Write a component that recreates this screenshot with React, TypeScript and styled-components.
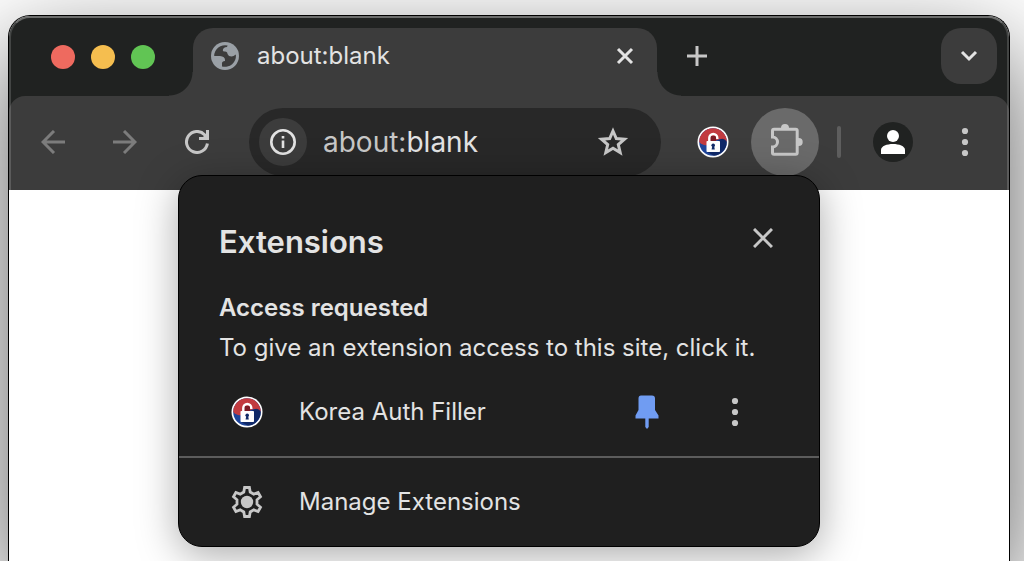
import React from "react";
import styled, { createGlobalStyle } from "styled-components";

const GlobalStyle = createGlobalStyle`
  *, *::before, *::after { box-sizing: border-box; }
  html, body, #root { height: 100%; }
  body {
    margin: 0;
    overflow: hidden;
    background: #fff;
    font-family: Inter, "Liberation Sans", sans-serif;
    color: #e3e3e3;
  }
  button, input { font: inherit; color: inherit; }
  h1, h2, p { margin: 0; }
`;

const Desktop = styled.div`
  display: flex;
  height: 100%;
  padding: 15px 14px 0 8px;
`;

const BrowserWindow = styled.main`
  flex: 1;
  display: flex;
  flex-direction: column;
  min-width: 0;
  border: 1px solid #000;
  border-bottom: 0;
  border-radius: 22px 22px 0 0;
  background: #fff;
  box-shadow: 0 36px 100px rgba(0, 0, 0, 0.65);
`;

const Chrome = styled.header`
  position: relative;
  border-radius: 21px 21px 0 0;
  background: #202221;

  &::after {
    content: "";
    position: absolute;
    inset: 0;
    border: 2px solid rgba(255, 255, 255, 0.16);
    border-top-color: rgba(255, 255, 255, 0.34);
    border-bottom: 0;
    border-radius: inherit;
    pointer-events: none;
  }
`;

const TabStrip = styled.div`
  display: flex;
  align-items: flex-end;
  height: 80px;
  padding: 0 12px 0 42px;
`;

const WindowControls = styled.div`
  display: flex;
  align-items: center;
  gap: 16px;
  height: 68px;
  margin-right: 38px;
  padding-bottom: 10px;
`;

const Light = styled.button<{ $color: string }>`
  width: 24px;
  height: 24px;
  padding: 0;
  border: 0;
  border-radius: 50%;
  background: ${(p) => p.$color};
`;

const Tab = styled.div`
  position: relative;
  display: flex;
  align-items: center;
  flex: 0 1 464px;
  height: 68px;
  padding: 0 16px 12px 18px;
  border-radius: 20px 20px 0 0;
  background: #3c3c3c;

  &::before,
  &::after {
    content: "";
    position: absolute;
    bottom: 0;
    width: 24px;
    height: 24px;
  }
  &::before {
    right: 100%;
    background: radial-gradient(circle at 0 0, transparent 23px, #3c3c3c 24px);
  }
  &::after {
    left: 100%;
    background: radial-gradient(circle at 100% 0, transparent 23px, #3c3c3c 24px);
  }
`;

const TabTitle = styled.span`
  flex: 1;
  margin-left: 18px;
  font-size: 24px;
  line-height: 32px;
`;

const PlainButton = styled.button<{ $size: number; $shade?: string }>`
  display: flex;
  flex: none;
  align-items: center;
  justify-content: center;
  width: ${(p) => p.$size}px;
  height: ${(p) => p.$size}px;
  padding: 0;
  border: 0;
  border-radius: 50%;
  background: ${(p) => p.$shade ?? "transparent"};
`;

const NewTabSlot = styled.div`
  display: flex;
  flex: 1;
  align-items: center;
  height: 56px;
  margin-bottom: 12px;
  padding-left: 12px;
`;

const TabSearch = styled(PlainButton)`
  margin-bottom: 12px;
  border-radius: 20px;
`;

const Toolbar = styled.nav`
  display: flex;
  align-items: center;
  gap: 4px;
  padding: 12px 10px 14px;
  border-radius: 16px 16px 0 0;
  background: #3c3c3c;
`;

const AddressBar = styled.div`
  display: flex;
  flex: 1;
  align-items: center;
  min-width: 0;
  height: 68px;
  margin: 0 14px;
  padding: 0 14px 0 10px;
  border-radius: 34px;
  background: #282828;
`;

const Address = styled.label`
  display: flex;
  flex: 1;
  min-width: 0;
  margin-left: 16px;
  font-size: 28px;
  line-height: 36px;
  color: #c7c7c7;
`;

const AddressInput = styled.input`
  flex: 1;
  min-width: 0;
  padding: 0;
  border: 0;
  outline: 0;
  background: transparent;
  color: #e3e3e3;
`;

const Divider = styled.span`
  flex: none;
  width: 4px;
  height: 32px;
  margin: 0 14px;
  border-radius: 2px;
  background: #5e5e5e;
`;

const MenuAnchor = styled.div`
  position: relative;
  z-index: 1;
`;

const Popup = styled.section`
  position: absolute;
  top: 67px;
  right: -1px;
  width: 642px;
  border: 1px solid #000;
  border-radius: 24px;
  background: #1f1f1f;
  box-shadow: 0 8px 40px rgba(0, 0, 0, 0.34);
`;

const PopupHeader = styled.div`
  display: flex;
  align-items: flex-start;
  justify-content: space-between;
  padding: 42px 36px 22px 40px;
`;

const PopupTitle = styled.h1`
  font-size: 31px;
  font-weight: 600;
  line-height: 48px;
`;

const AccessInfo = styled.div`
  padding: 0 40px;
  font-size: 24px;
  line-height: 40px;
  white-space: nowrap;
`;

const AccessTitle = styled.h2`
  font-size: 24px;
  font-weight: 600;
  line-height: 40px;
`;

const Row = styled.div`
  display: flex;
  padding: 0 40px;

  & + & { border-top: 2px solid #5c5c5c; }
`;

const RowButton = styled.button`
  display: flex;
  flex: 1;
  align-items: center;
  gap: 36px;
  height: 88px;
  padding: 0 12px;
  border: 0;
  background: transparent;
  font-size: 24px;
  line-height: 32px;
  text-align: left;
`;

const Stroke = ({ d, size, width, color = "#c7c7c7" }: { d: string; size: number; width: number; color?: string }) => (
  <svg width={size} height={size} viewBox={`0 0 ${size} ${size}`} fill="none" stroke={color} strokeWidth={width}>
    <path d={d} />
  </svg>
);

const Dots = () => (
  <svg width="8" height="32" viewBox="0 0 8 32" fill="#c7c7c7">
    <circle cx="4" cy="5" r="3.1" />
    <circle cx="4" cy="16" r="3.1" />
    <circle cx="4" cy="27" r="3.1" />
  </svg>
);

const Globe = () => (
  <svg width="28" height="28" viewBox="0 0 28 28">
    <circle cx="14" cy="14" r="14" fill="#9aa0a6" />
    <path d="M3.200 14 A10.800 10.800 0 0 1 16.600 3.500 L16 5 Q12 5 11.800 8.500 Q12 9.800 14 9.500 Q16.500 9.500 16.500 12 Q17.500 14.500 20.500 14.500 Q22.500 14.500 24.800 12.500 A10.800 10.800 0 0 1 11 24.400 V22 Q10.500 19.500 14 19 Q14.500 14.500 9 14Z" fill="#3c3c3c" />
  </svg>
);

const Reload = () => (
  <svg width="24" height="24" viewBox="0 0 24 24" fill="none" stroke="#c7c7c7" strokeWidth="3">
    <path d="M22.400 13.500 A10.500 10.500 0 1 1 19.600 4.700 L22 7.500" />
    <path d="M22.500 0 V8.500 H14" />
    <path d="M16.500 8.500 L22.500 2.500 V8.500Z" fill="#c7c7c7" stroke="none" />
  </svg>
);

const LockBadge = () => (
  <svg width="32" height="32" viewBox="0 0 32 32">
    <circle cx="16" cy="16" r="15.500" fill="#fff" />
    <circle cx="16" cy="16" r="13.800" fill="#1e459b" />
    <path d="M2.200 16 A13.800 13.800 0 0 1 29.800 16 Q28 12.500 23 13 Q18 14 16 17 Q12 20 7 19 Q3.500 18 2.200 16Z" fill="#c23b40" />
    <path d="M22 14 L25 12.800 Q28.500 13 29.800 16 A13.800 13.800 0 0 1 17 29.700 L10 26Z" fill="#0b1f57" opacity=".75" />
    <path d="M13 10 H19 V15 H13Z" fill="#7c1c26" />
    <path d="M12.300 15.500 V12 A4 4 0 0 1 20.300 12 V13" fill="none" stroke="#fff" strokeWidth="2.400" />
    <rect x="9.500" y="15" width="13.500" height="11" rx=".8" fill="#fff" />
    <circle cx="16.200" cy="19.300" r="1.800" fill="#102a68" />
    <path d="M15.300 20 H17.100 L17.800 23.500 H14.600Z" fill="#102a68" />
  </svg>
);

const Puzzle = () => (
  <svg width="36" height="36" viewBox="0 0 36 36" fill="none">
    <path d="M7 5.200 H28.700 Q30.200 5.200 30.200 6.700 V28.700 Q30.200 30.200 28.700 30.200 H7 Q5.500 30.200 5.500 28.700 V23 A5 5 0 0 0 5.500 13 V6.700 Q5.500 5.200 7 5.200Z" stroke="#c7c7c7" strokeWidth="3" />
    <path d="M14 5 V4 A4 4 0 0 1 22 4 V5Z M31 14 H31.700 A4 4 0 0 1 31.700 22 H31Z" fill="#c7c7c7" />
  </svg>
);

const Gear = () => (
  <svg width="32" height="32" viewBox="0 0 32 32">
    <path d="M13.600 1.500 H18.400 L19.200 6 L22.800 8.100 L27.100 6.500 L29.500 10.700 L26 13.800 V18.200 L29.500 21.300 L27.100 25.500 L22.800 23.900 L19.200 26 L18.400 30.500 H13.600 L12.800 26 L9.200 23.900 L4.900 25.500 L2.500 21.300 L6 18.200 V13.800 L2.500 10.700 L4.900 6.500 L9.200 8.100 L12.800 6Z" fill="none" stroke="#c7c7c7" strokeWidth="2.800" />
    <circle cx="16" cy="16" r="6.200" fill="#c7c7c7" />
  </svg>
);

const Pin = () => (
  <svg width="24" height="34" viewBox="0 0 24 34" fill="#709cf2">
    <path d="M6 0.500 H17 Q20 0.500 20 3.500 V15 L23.500 20.500 V23.500 H13.700 V32 L12 34 L10.300 32 V23.500 H0.500 V20.500 L3.500 15 V3.500 Q3.500 0.500 6 0.500Z" />
  </svg>
);

const Person = () => (
  <svg width="40" height="40" viewBox="0 0 40 40">
    <circle cx="20" cy="20" r="20" fill="#202221" />
    <circle cx="20" cy="14" r="6" fill="#fff" />
    <path d="M8 32 V28 C8 24 14 22 20 22 S32 24 32 28 V32Z" fill="#fff" />
  </svg>
);

export default function App() {
  return (
    <>
      <GlobalStyle />
      <Desktop>
        <BrowserWindow>
          <Chrome>
            <TabStrip>
              <WindowControls>
                <Light $color="#ee6a5f" aria-label="Close window" />
                <Light $color="#f5be4f" aria-label="Minimize window" />
                <Light $color="#61c554" aria-label="Zoom window" />
              </WindowControls>
              <Tab>
                <Globe />
                <TabTitle>about:blank</TabTitle>
                <PlainButton $size={32} aria-label="Close tab">
                  <Stroke size={18} width={3} color="#e3e3e3" d="M2 2 L16 16 M16 2 L2 16" />
                </PlainButton>
              </Tab>
              <NewTabSlot>
                <PlainButton $size={56} aria-label="New tab">
                  <Stroke size={20} width={3} d="M10 0 V20 M0 10 H20" />
                </PlainButton>
              </NewTabSlot>
              <TabSearch $size={56} $shade="#3c3c3c" aria-label="Search tabs">
                <Stroke size={20} width={3} color="#e3e3e3" d="M3 6 L10 13 L17 6" />
              </TabSearch>
            </TabStrip>
            <Toolbar>
              <PlainButton $size={68} aria-label="Back">
                <Stroke size={24} width={3} color="#7c7c7c" d="M24 12 H2 M13 1 L2 12 L13 23" />
              </PlainButton>
              <PlainButton $size={68} aria-label="Forward">
                <Stroke size={24} width={3} color="#7c7c7c" d="M0 12 H22 M11 1 L22 12 L11 23" />
              </PlainButton>
              <PlainButton $size={68} aria-label="Reload">
                <Reload />
              </PlainButton>
              <AddressBar>
                <PlainButton $size={48} $shade="#3c3c3c" aria-label="View site information">
                  <svg width="26" height="26" viewBox="0 0 26 26" fill="none" stroke="#e3e3e3" strokeWidth="2.600">
                    <circle cx="13" cy="13" r="11.700" />
                    <path d="M13 11.500 V19 M13 7 V9.500" />
                  </svg>
                </PlainButton>
                <Address>
                  <span>about:</span>
                  <AddressInput defaultValue="blank" aria-label="Address" />
                </Address>
                <PlainButton $size={68} aria-label="Bookmark this tab">
                  <Stroke size={32} width={3} d="M16 5 L19.300 12.500 L27.500 13.200 L21.300 18.600 L23.200 26.600 L16 22.300 L8.800 26.600 L10.700 18.600 L4.500 13.200 L12.700 12.500Z" />
                </PlainButton>
              </AddressBar>
              <PlainButton $size={68} aria-label="Korea Auth Filler">
                <LockBadge />
              </PlainButton>
              <MenuAnchor>
                <PlainButton $size={68} $shade="#6a6a6a" aria-label="Extensions" aria-expanded="true">
                  <Puzzle />
                </PlainButton>
                <Popup>
                  <PopupHeader>
                    <PopupTitle>Extensions</PopupTitle>
                    <PlainButton $size={40} aria-label="Close">
                      <Stroke size={20} width={3} d="M1 1 L19 19 M19 1 L1 19" />
                    </PlainButton>
                  </PopupHeader>
                  <AccessInfo>
                    <AccessTitle>Access requested</AccessTitle>
                    <p>To give an extension access to this site, click it.</p>
                  </AccessInfo>
                  <Row>
                    <RowButton>
                      <LockBadge />
                      Korea Auth Filler
                    </RowButton>
                    <PlainButton $size={88} aria-label="Unpin">
                      <Pin />
                    </PlainButton>
                    <PlainButton $size={88} aria-label="More options">
                      <Dots />
                    </PlainButton>
                  </Row>
                  <Row>
                    <RowButton>
                      <Gear />
                      Manage Extensions
                    </RowButton>
                  </Row>
                </Popup>
              </MenuAnchor>
              <Divider />
              <PlainButton $size={68} aria-label="Profile">
                <Person />
              </PlainButton>
              <PlainButton $size={68} aria-label="Menu">
                <Dots />
              </PlainButton>
            </Toolbar>
          </Chrome>
        </BrowserWindow>
      </Desktop>
    </>
  );
}
